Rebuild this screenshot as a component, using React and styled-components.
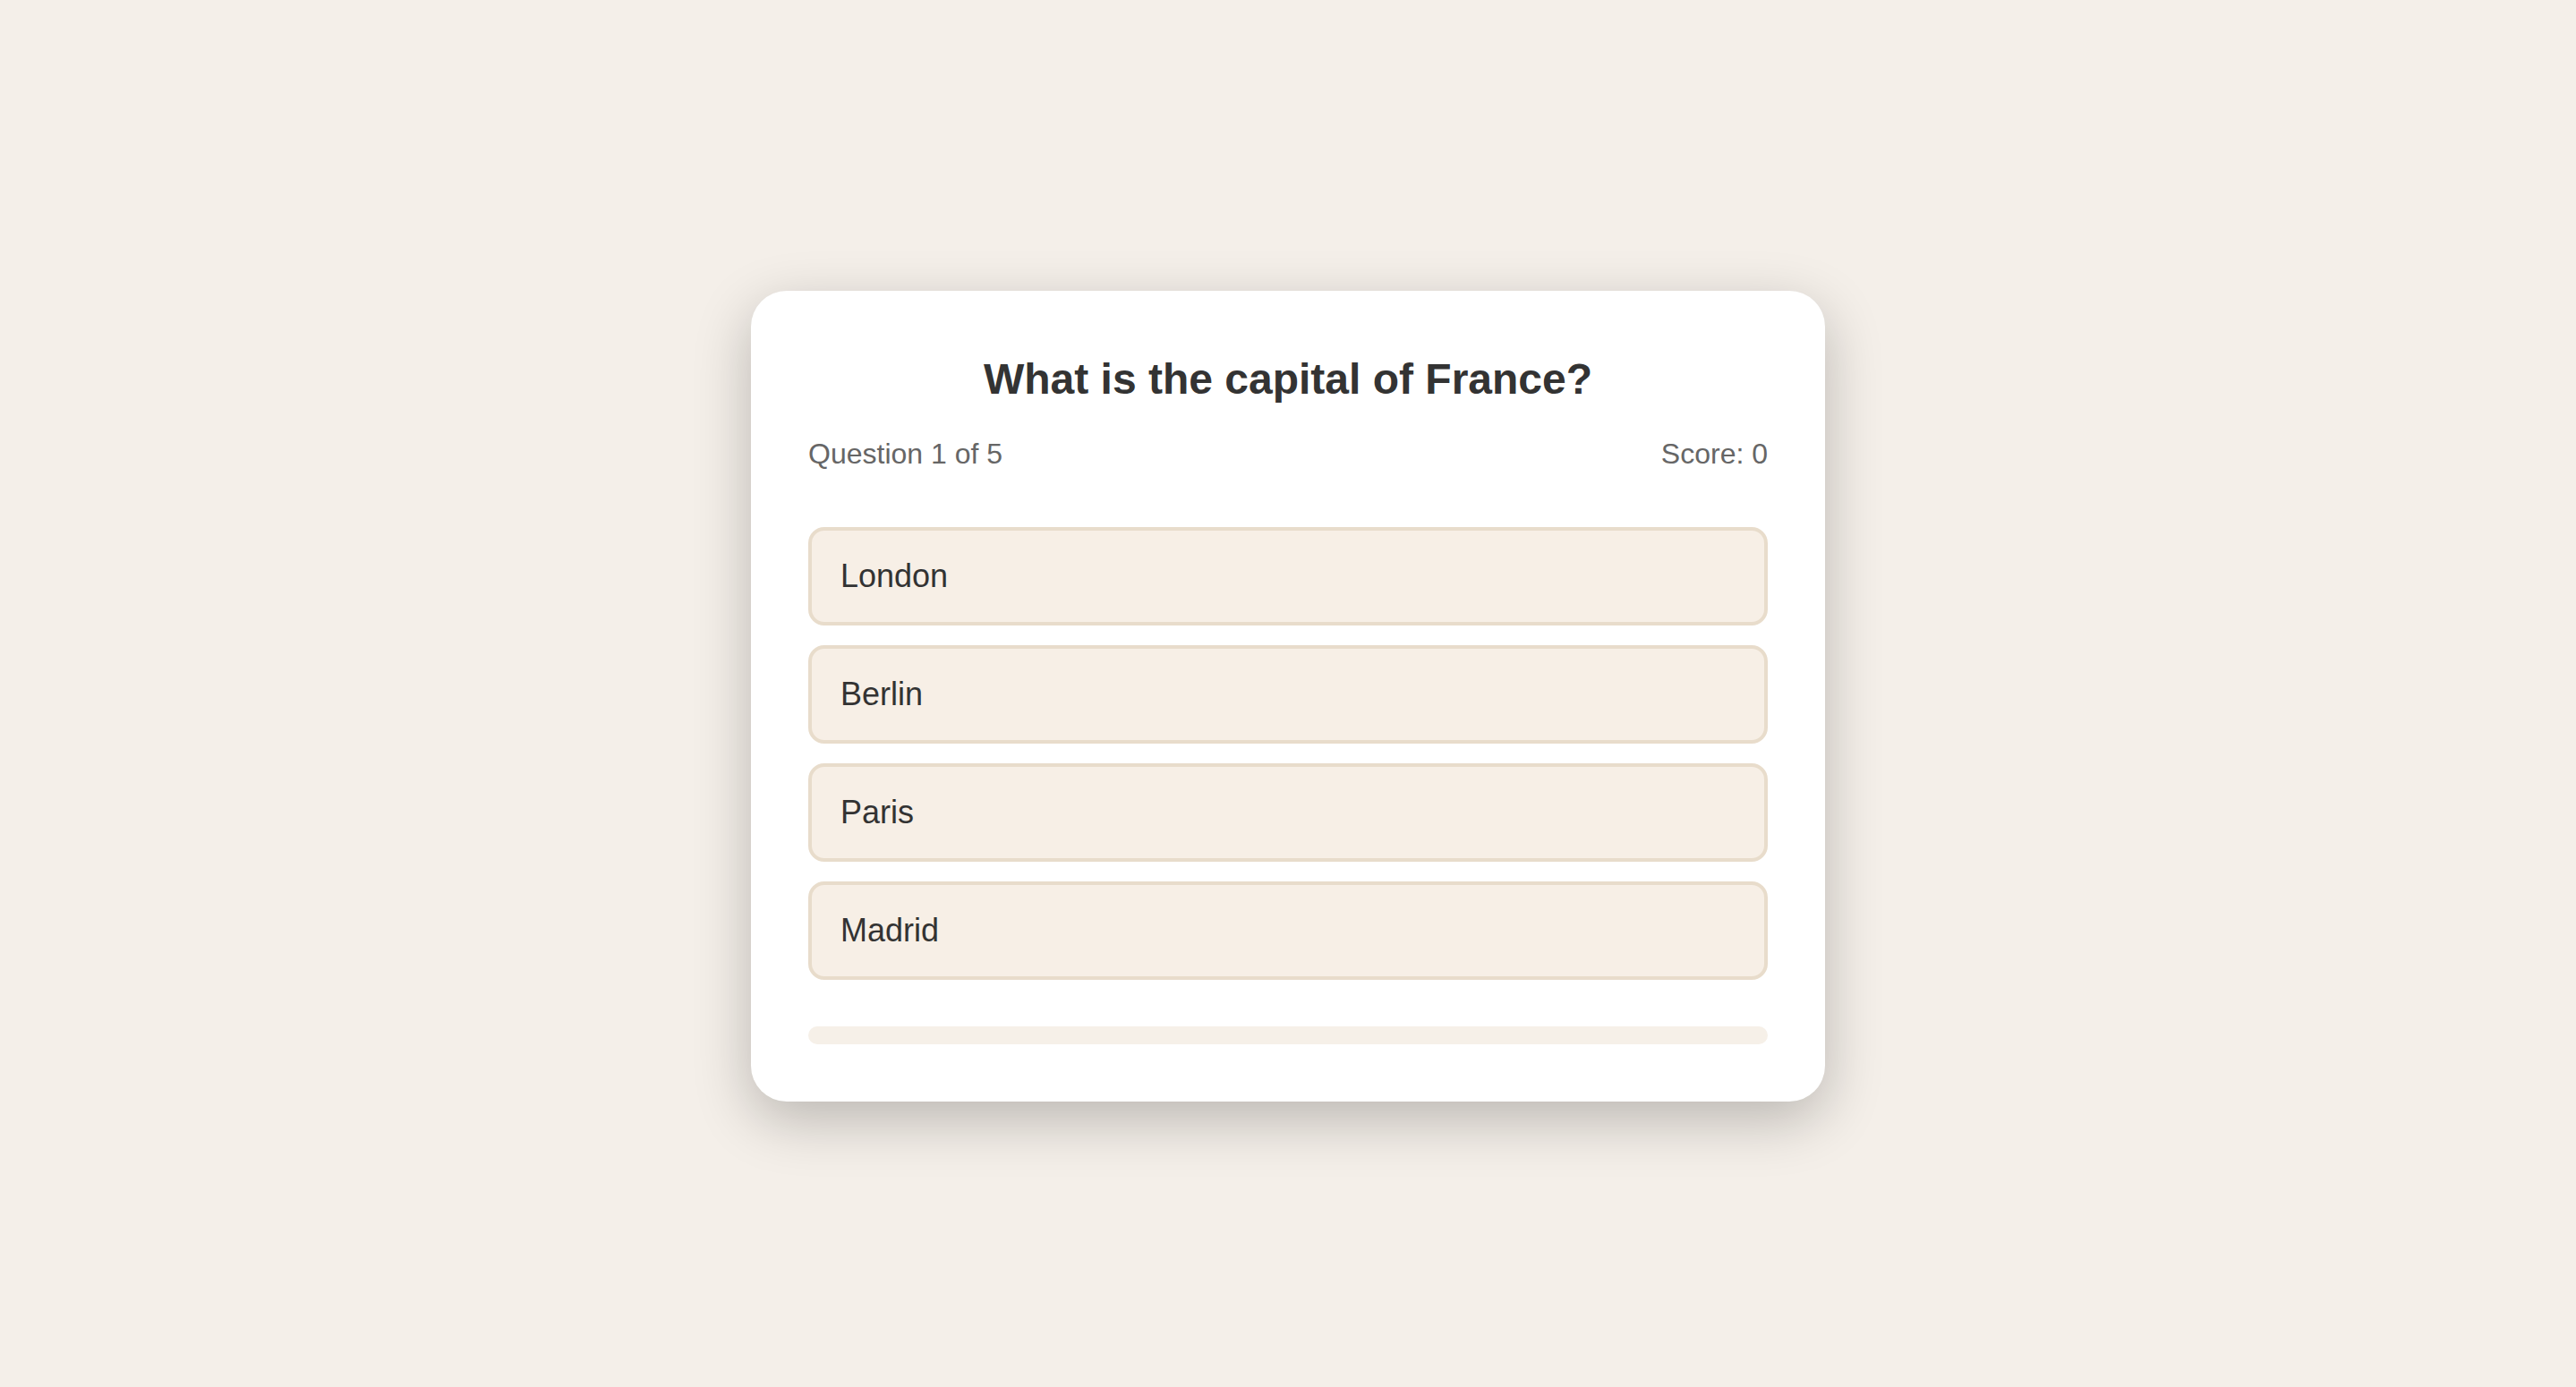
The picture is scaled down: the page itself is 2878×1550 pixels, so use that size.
import React from "react";
import styled, { createGlobalStyle } from "styled-components";

const Global = createGlobalStyle`
  html, body { margin: 0; padding: 0; }
  body {
    background: #f4efe9;
    font-family: "Liberation Sans", Arial, Helvetica, sans-serif;
  }
  * { box-sizing: border-box; }
`;

const Page = styled.div`
  width: 100%;
  height: 1550px;
  padding-top: 5px;
  display: flex;
  align-items: center;
  justify-content: center;
  background: #f4efe9;
`;

const Card = styled.div`
  width: 1200px;
  background: #ffffff;
  border-radius: 40px;
  padding: 71px 64px 64px;
  box-shadow: 0 20px 64px rgba(0, 0, 0, 0.24);
  display: flex;
  flex-direction: column;
`;

const Title = styled.h1`
  margin: 0 0 38px;
  font-size: 48px;
  font-weight: 700;
  color: #333333;
  text-align: center;
  line-height: 55px;
`;

const Meta = styled.div`
  display: flex;
  justify-content: space-between;
  font-size: 32px;
  line-height: 37px;
  color: #666666;
  margin-bottom: 63px;
`;

const Options = styled.div`
  display: flex;
  flex-direction: column;
  gap: 22px;
  margin-bottom: 52px;
`;

const Option = styled.button`
  display: block;
  width: 100%;
  text-align: left;
  font-family: inherit;
  font-size: 36px;
  line-height: 42px;
  color: #333333;
  background: #f7efe6;
  border: 4px solid #e8dccb;
  border-radius: 18px;
  padding: 30px 32px;
  cursor: pointer;
`;

const Track = styled.div`
  height: 20px;
  border-radius: 10px;
  background: #f6f0e8;
  overflow: hidden;
`;

const Fill = styled.div`
  height: 100%;
  background: #e8dccb;
`;

const options = ["London", "Berlin", "Paris", "Madrid"];

export default function App() {
  const progress = 0;
  return (
    <>
      <Global />
      <Page>
        <Card>
          <Title>What is the capital of France?</Title>
          <Meta>
            <span>Question 1 of 5</span>
            <span>Score: 0</span>
          </Meta>
          <Options>
            {options.map((o) => (
              <Option key={o}>{o}</Option>
            ))}
          </Options>
          <Track>
            <Fill style={{ width: `${progress}%` }} />
          </Track>
        </Card>
      </Page>
    </>
  );
}
